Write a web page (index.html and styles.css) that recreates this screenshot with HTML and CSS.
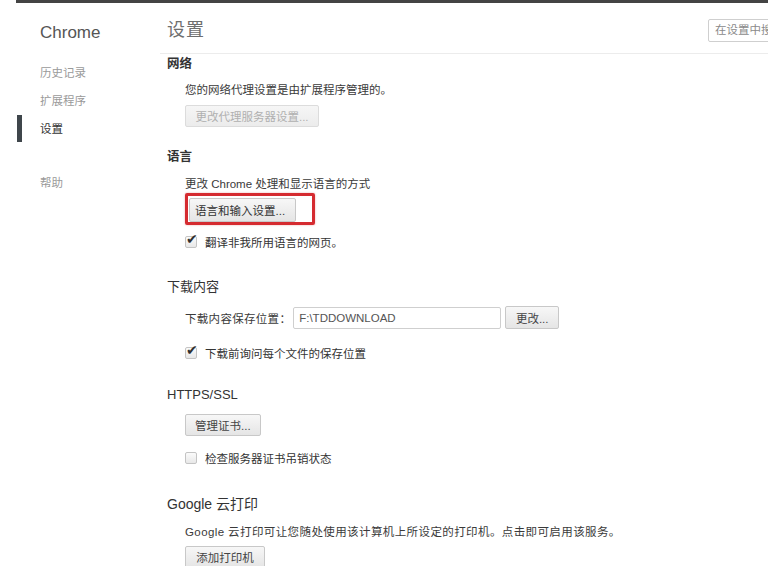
FILE: index.html
```html
<!DOCTYPE html>
<html lang="zh-CN">
<head>
    <meta charset="UTF-8">
    <title>设置</title>
    <link rel="stylesheet" href="styles.css">
</head>
<body>

    <div class="topbar"></div>

    <div class="page">
        <div class="nav">
            <div class="brand">Chrome</div>
            <ul class="nav-list">
                <li>历史记录</li>
                <li>扩展程序</li>
                <li class="active">设置</li>
                <li class="help">帮助</li>
            </ul>
        </div>

        <div class="main">
            <div class="main-header">
                <h1>设置</h1>
                <div class="search">在设置中搜索</div>
            </div>

            <h3 class="sec bold first">网络</h3>
            <div class="sec-body">
                <p class="line l-net">您的网络代理设置是由扩展程序管理的。</p>
                <button class="btn disabled b-net">更改代理服务器设置...</button>
            </div>

            <h3 class="sec bold s-lang">语言</h3>
            <div class="sec-body">
                <p class="line l-lang">更改 Chrome 处理和显示语言的方式</p>
                <div class="highlight">
                    <button class="btn">语言和输入设置...</button>
                </div>
                <label class="check c-lang"><span class="box checked"></span>翻译非我所用语言的网页。</label>
            </div>

            <h3 class="sec s-down">下载内容</h3>
            <div class="sec-body">
                <div class="row">
                    <span>下载内容保存位置：</span>
                    <div class="path">F:\TDDOWNLOAD</div>
                    <button class="btn">更改...</button>
                </div>
                <label class="check c-down"><span class="box checked"></span>下载前询问每个文件的保存位置</label>
            </div>

            <h3 class="sec s-ssl">HTTPS/SSL</h3>
            <div class="sec-body">
                <button class="btn b-ssl">管理证书...</button>
                <label class="check c-ssl"><span class="box"></span>检查服务器证书吊销状态</label>
            </div>

            <h3 class="sec big s-print">Google 云打印</h3>
            <div class="sec-body">
                <p class="line l-print">Google 云打印可让您随处使用该计算机上所设定的打印机。点击即可启用该服务。</p>
                <button class="btn b-print">添加打印机</button>
            </div>
        </div>
    </div>

</body>
</html>
```

FILE: styles.css
```css
body {
    margin: 0;
    padding: 0;
    background-color: #fff;
    font-family: "Liberation Sans", "Noto Sans CJK SC", sans-serif;
    font-size: 11.5px;
    color: #3a3a3a;
    overflow: hidden;
}

.topbar {
    height: 3px;
    width: 752px;
    margin-left: 16px;
    background-color: #444;
}

.page {
    width: 768px;
    display: flex;
    overflow: hidden;
}

/* left column */
.nav {
    width: 120px;
    padding-left: 40px;
    flex-shrink: 0;
}

.brand {
    font-size: 17px;
    line-height: 24px;
    margin-top: 18px;
    color: #555;
}

.nav-list {
    list-style: none;
    margin: 14px 0 0 0;
    padding: 0;
}

.nav-list li {
    line-height: 28px;
    color: #9a9a9a;
    position: relative;
}

.nav-list li.active {
    color: #333;
}

.nav-list li.active::before {
    content: "";
    position: absolute;
    left: -23px;
    top: 0;
    width: 5px;
    height: 27px;
    background-color: #3f464b;
}

.nav-list li.help {
    margin-top: 26px;
}

/* right column */
.main {
    flex: 1;
    min-width: 0;
}

.main-header {
    display: flex;
    align-items: center;
    justify-content: space-between;
    height: 50px;
    margin-right: -40px;
    padding-left: 7px;
    border-bottom: 1px solid #ececec;
}

.main-header h1 {
    margin: 0;
    font-size: 18px;
    font-weight: normal;
    color: #6e6e6e;
    letter-spacing: 1px;
}

.search {
    width: 92px;
    height: 21px;
    line-height: 21px;
    padding-left: 6px;
    border: 1px solid #cfcfcf;
    border-radius: 2px;
    color: #8a8a8a;
    font-size: 11.5px;
    white-space: nowrap;
    overflow: hidden;
    margin-top: 4px;
}

.sec {
    margin: 0;
    padding-left: 7px;
    line-height: 20px;
    font-size: 13px;
    font-weight: normal;
    color: #333;
}

.sec.bold {
    font-size: 12.5px;
    font-weight: bold;
}

.sec.big {
    font-size: 14px;
}

.sec-body {
    padding-left: 25px;
}

.s-lang { margin-top: 20px; }
.s-down { margin-top: 26px; }
.s-ssl { margin-top: 23px; }
.s-print { margin-top: 27px; }

.line {
    margin: 0;
    line-height: 18px;
}

.l-net { margin-top: 7px; }
.l-lang { margin-top: 8px; }
.l-print { margin-top: 9px; letter-spacing: 0.4px; }

.btn {
    display: block;
    height: 22px;
    padding: 0 9px;
    font-family: inherit;
    font-size: 11.5px;
    color: #444;
    background: linear-gradient(#f7f7f7, #e5e5e5);
    border: 1px solid #c8c8c8;
    border-radius: 2px;
}

.btn.disabled {
    color: #b0b0b0;
    background: linear-gradient(#f6f6f6, #ececec);
    border-color: #dcdcdc;
}

.b-net { margin-top: 6px; width: 134px; }
.b-ssl { margin-top: 9px; }
.b-print { margin-top: 5px; width: 80px; }

.highlight {
    display: inline-block;
    width: 123px;
    padding: 2px 0 0 1px;
    border: 3px solid #d52b30;
    border-radius: 2px;
    box-shadow: 0 0 2px rgba(200, 30, 30, 0.4);
}

.highlight .btn {
    width: 107px;
    height: 24px;
    text-align: left;
    padding-left: 5px;
    color: #333;
}

.check {
    display: flex;
    align-items: center;
    height: 18px;
    color: #333;
}

.c-lang { margin-top: 8px; }
.c-down { margin-top: 15px; }
.c-ssl { margin-top: 13px; }

.box {
    width: 10px;
    height: 10px;
    margin-right: 8px;
    border: 1px solid #c4c4c4;
    border-radius: 2px;
    background: linear-gradient(#fbfbfb, #e8e8e8);
    position: relative;
}

.box.checked::after {
    content: "✔";
    position: absolute;
    left: 0;
    top: -6px;
    font-size: 14px;
    color: #2f2f2f;
}

.row {
    display: flex;
    align-items: center;
    margin-top: 9px;
}

.row span {
    letter-spacing: 0.3px;
}

.path {
    width: 201px;
    height: 20px;
    line-height: 20px;
    margin-left: 2px;
    padding-left: 5px;
    border: 1px solid #cfcfcf;
    border-radius: 2px;
    color: #555;
    font-size: 11.5px;
}

.row .btn {
    margin-left: 4px;
    width: 54px;
    height: 23px;
}
```
